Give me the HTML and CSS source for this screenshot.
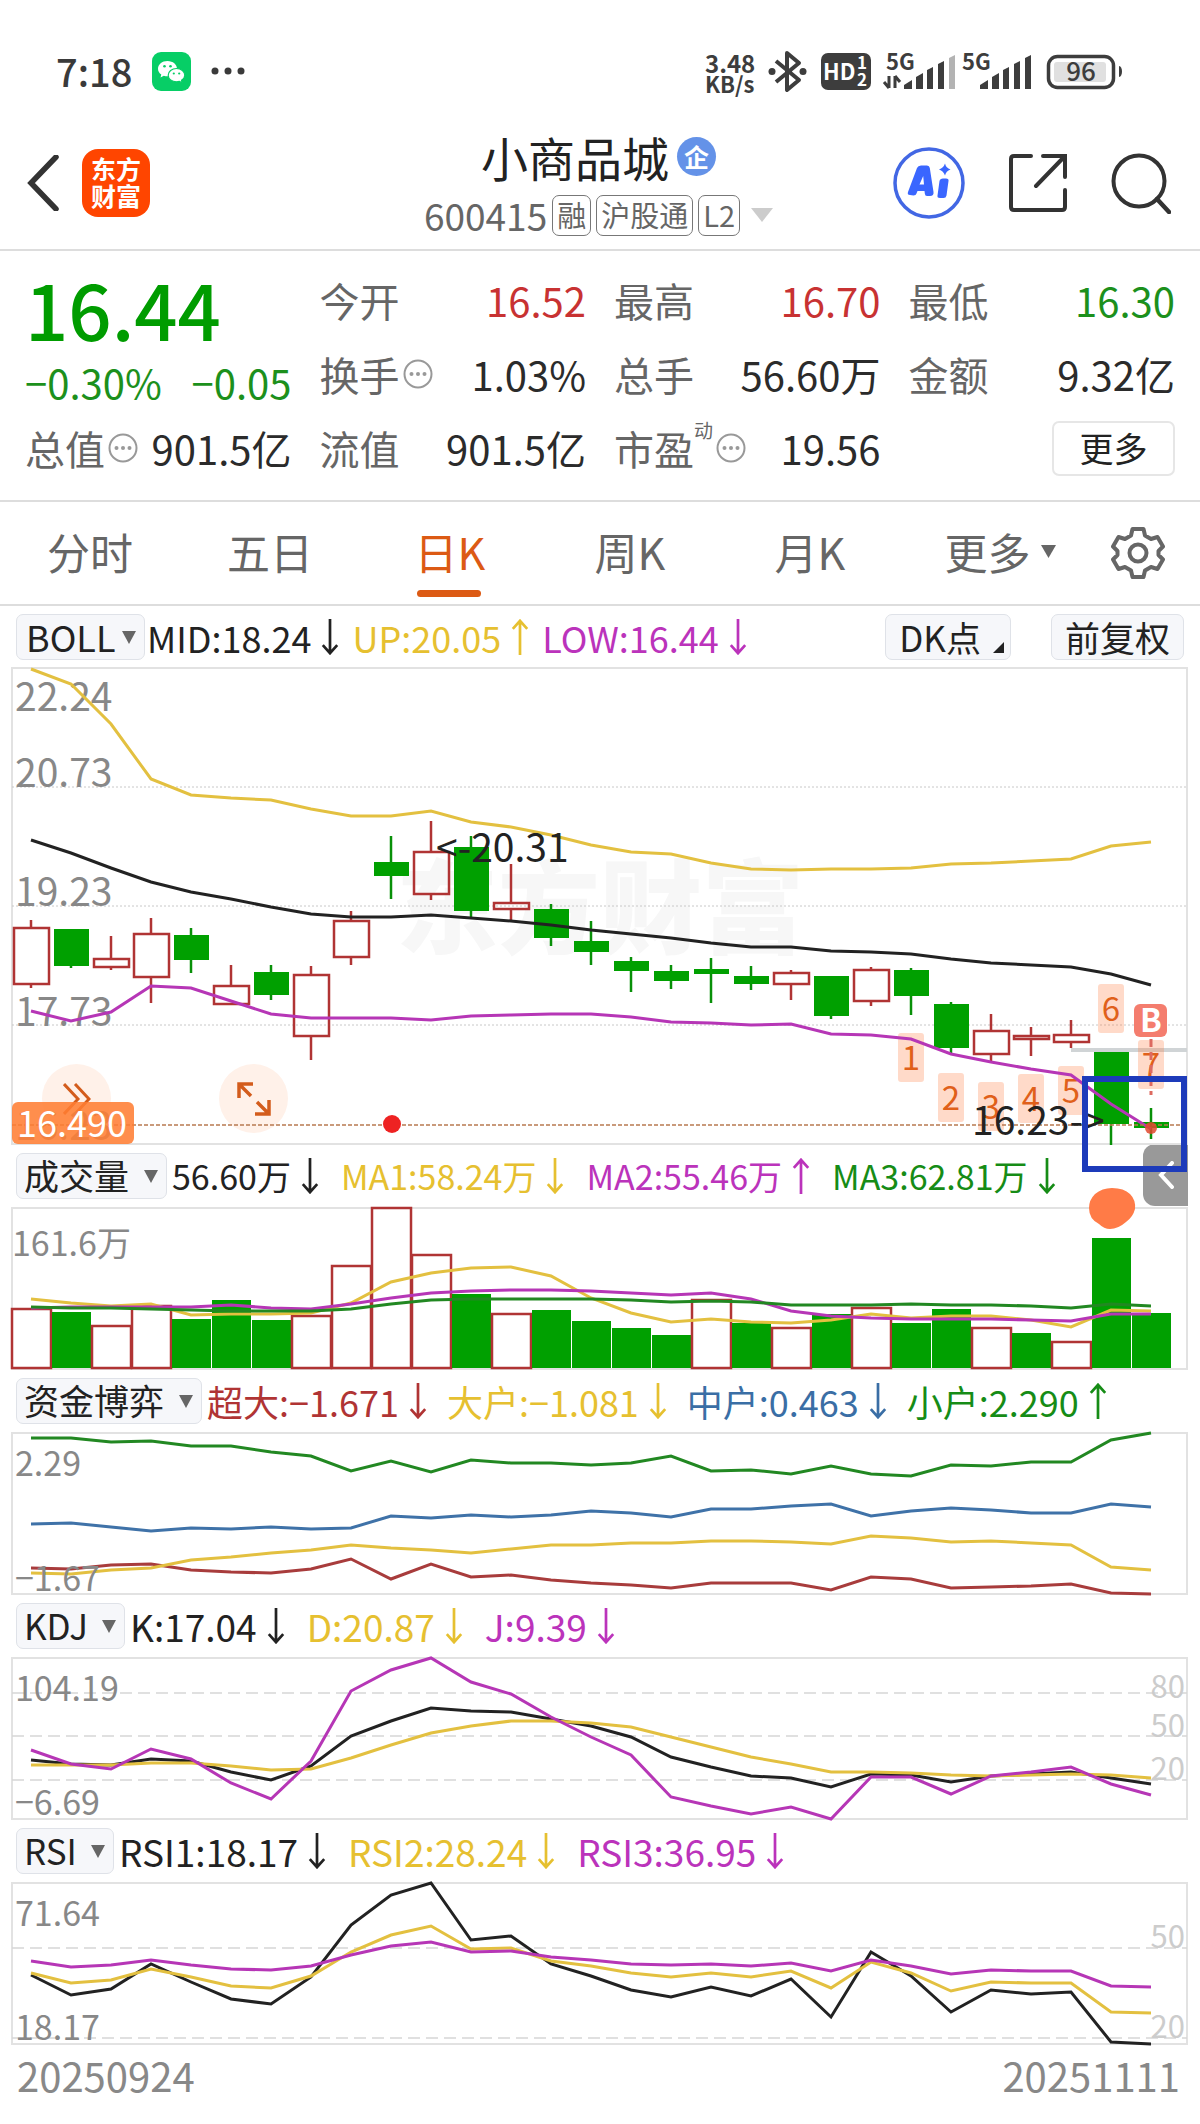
FILE: index.html
```html
<!DOCTYPE html>
<html lang="zh-CN">
<head>
<meta charset="utf-8">
<meta name="viewport" content="width=device-width, initial-scale=1">
<title>小商品城 600415</title>
<link rel="stylesheet" href="styles.css">
</head>
<body>
<svg class="sprite" aria-hidden="true">
  <symbol id="down" viewBox="0 0 18 40"><path d="M9 0V38M1 29L9 38L17 29" fill="none" stroke="currentColor" stroke-width="3"/></symbol>
  <symbol id="up" viewBox="0 0 18 40"><path d="M9 40V2M1 11L9 2L17 11" fill="none" stroke="currentColor" stroke-width="3"/></symbol>
  <symbol id="info" viewBox="0 0 30 30"><circle cx="15" cy="15" r="13.5" fill="none" stroke="#999" stroke-width="2"/><g fill="#999"><circle cx="8.500" cy="15" r="2"/><circle cx="15" cy="15" r="2"/><circle cx="21.500" cy="15" r="2"/></g></symbol>
</svg>

<header>
  <div class="status">
    <time>7:18</time>
    <svg class="wechat" viewBox="0 0 39 39" role="img" aria-label="微信">
      <rect width="39" height="39" rx="9" fill="#07ce66"/>
      <path d="M15.500 9C10 9 6 12.500 6 16.700c0 2.400 1.300 4.400 3.300 5.800L8.500 25.500l3.300-1.700c1.200.4 2.400.5 3.700.5 5.500 0 9.500-3.500 9.500-7.600S21 9 15.500 9z" fill="#fff"/>
      <path d="M24.500 16.500c-4.700 0-8.300 3.100-8.300 6.700s3.600 6.600 8.300 6.600c1.100 0 2-.1 2.900-.4l2.900 1.500-.8-2.600c2-1.300 3.300-3 3.300-5.100 0-3.600-3.600-6.700-8.300-6.700z" fill="#fff" stroke="#07ce66" stroke-width="1.200"/>
      <g fill="#07ce66"><circle cx="12.500" cy="14.300" r="1.300"/><circle cx="18.500" cy="14.300" r="1.300"/><circle cx="21.800" cy="21.500" r="1.100"/><circle cx="27.200" cy="21.500" r="1.100"/></g>
    </svg>
    <svg class="dots" viewBox="0 0 34 8" aria-hidden="true"><g fill="#3a3a3a"><circle cx="4" cy="4" r="3.500"/><circle cx="17" cy="4" r="3.500"/><circle cx="30" cy="4" r="3.500"/></g></svg>
    <svg class="system" viewBox="702 35 424 72" role="img" aria-label="系统状态">
      <g class="sys-text">
        <text x="705" y="73" font-size="24">3.48</text>
        <text x="705" y="93" font-size="22">KB/s</text>
        <text x="886" y="70" font-size="22">5G</text>
        <text x="962" y="70" font-size="22">5G</text>
      </g>
      <path d="M776 61L799 80L787 90V53L799 63L776 82" fill="none" stroke="#3d3d3d" stroke-width="4" stroke-linejoin="round"/>
      <circle cx="772" cy="71.500" r="3.500" fill="#3d3d3d"/><circle cx="803" cy="71.500" r="3.500" fill="#3d3d3d"/>
      <rect x="821" y="53" width="50" height="37" rx="7" fill="#3d3d3d"/>
      <g class="hd"><text x="823" y="80" font-size="22">HD</text><text x="857" y="69" font-size="17">1</text><text x="857" y="86" font-size="17">2</text></g>
      <path d="M889 76V88M889 88L884 82M895 88V76M895 76L900 82" fill="none" stroke="#3d3d3d" stroke-width="3"/>
      <g fill="#3d3d3d">
        <path d="M904 85l8-5v9h-8zM916 77l7-4v16h-7zM927 70l6-3v22h-6zM938 64l6-3v28h-6z"/>
        <path d="M980 85l8-5v9h-8zM992 77l7-4v16h-7zM1003 70l6-3v22h-6zM1014 64l6-3v28h-6zM1025 58l6-3v34h-6z"/>
      </g>
      <path d="M949 58l6-3v34h-6z" fill="#b3b3b3"/>
      <rect x="1048.500" y="56.500" width="65" height="31" rx="9" fill="#fff" stroke="#3d3d3d" stroke-width="3.500"/>
      <rect x="1054" y="62" width="52" height="20" rx="3" fill="#e0e0e0"/>
      <path d="M1119 66c4 0 4 11 0 11z" fill="#3d3d3d"/>
      <text class="battery" x="1081" y="81" font-size="26" text-anchor="middle">96</text>
    </svg>
  </div>

  <nav class="bar">
    <div class="bar-left">
      <button class="icon" aria-label="返回"><svg width="34" height="56" viewBox="0 0 34 56"><path d="M30 2L5 28L30 54" fill="none" stroke="#333" stroke-width="5.500" stroke-linecap="round"/></svg></button>
      <a class="logo" href="#">东方<br>财富</a>
    </div>
    <div class="stock">
      <h1>小商品城<span class="corp">企</span></h1>
      <div class="code"><span class="num">600415</span><span class="tag">融</span><span class="tag">沪股通</span><span class="tag">L2</span><svg width="22" height="14" viewBox="0 0 22 14" aria-hidden="true"><path d="M0 0H22L11 14z" fill="#ccc"/></svg></div>
    </div>
    <div class="bar-right">
      <button class="icon" aria-label="AI"><svg width="72" height="72" viewBox="0 0 72 72"><circle cx="36" cy="36" r="34" fill="none" stroke="#4267e4" stroke-width="3.500"/><path fill="#3a66ff" fill-rule="evenodd" d="M17 48Q14 48 15 45L24 21Q25 18.500 28 18.500H34Q36.500 18.500 36.800 21L40.500 45Q41 49 37 49H34Q32 49 31.800 46.500L31.500 44H24.500L23.500 46.500Q23 48.500 20.500 48.500zM26.500 37.500H31L30.200 29z"/><path fill="#3a66ff" d="M46.500 34Q47 31.500 50 31.500H53Q56 31.500 55.500 34L53.500 48.500Q53 51 50.500 51H47Q44 51 44.500 48.500zM52 16.500Q53 21 57.500 22.500Q53 24 52 28.500Q50.500 24 46 22.500Q50.500 21 52 16.500z"/></svg></button>
      <button class="icon" aria-label="分享"><svg width="60" height="60" viewBox="0 0 60 60"><path d="M23 3H6Q3 3 3 6V54Q3 57 6 57H54Q57 57 57 54V37M35 3H57V24M57 3L28 33" fill="none" stroke="#333" stroke-width="4" stroke-linecap="round"/></svg></button>
      <button class="icon" aria-label="搜索"><svg width="60" height="62" viewBox="0 0 60 62"><circle cx="28" cy="29" r="25.500" fill="none" stroke="#333" stroke-width="4"/><path d="M46 47L58 60" stroke="#333" stroke-width="4.500" stroke-linecap="round"/></svg></button>
    </div>
  </nav>
</header>

<main>
  <section class="quote">
    <div class="last">
      <strong>16.44</strong>
      <p><span>−0.30%</span><span>−0.05</span></p>
    </div>
    <div class="cell"><span>今开</span><b class="rise">16.52</b></div>
    <div class="cell"><span>最高</span><b class="rise">16.70</b></div>
    <div class="cell"><span>最低</span><b class="fall">16.30</b></div>
    <div class="cell"><span>换手<svg class="info"><use href="#info"/></svg></span><b>1.03%</b></div>
    <div class="cell"><span>总手</span><b>56.60万</b></div>
    <div class="cell"><span>金额</span><b>9.32亿</b></div>
    <div class="cell"><span>总值<svg class="info"><use href="#info"/></svg></span><b>901.5亿</b></div>
    <div class="cell"><span>流值</span><b>901.5亿</b></div>
    <div class="cell"><span>市盈<sup>动</sup><svg class="info"><use href="#info"/></svg></span><b>19.56</b></div>
    <div class="cell end"><button class="more">更多</button></div>
  </section>

  <nav class="tabs">
    <a href="#">分时</a>
    <a href="#">五日</a>
    <a href="#" class="on" aria-current="page">日K</a>
    <a href="#">周K</a>
    <a href="#">月K</a>
    <a href="#">更多<svg width="15" height="13" viewBox="0 0 15 13" aria-hidden="true"><path d="M0 0H15L7.500 13z" fill="#666"/></svg></a>
    <button class="icon" aria-label="设置"><svg width="54" height="54" viewBox="0 0 54 54"><path d="M21.500 3H32.500L34 9.500L40 13L46.500 11L52 20.500L47.500 25V29L52 33.500L46.500 43L40 41L34 44.500L32.500 51H21.500L20 44.500L14 41L7.500 43L2 33.500L6.500 29V25L2 20.500L7.500 11L14 13L20 9.500z" fill="none" stroke="#666" stroke-width="4" stroke-linejoin="round"/><circle cx="27" cy="27" r="8.500" fill="none" stroke="#666" stroke-width="4"/></svg></button>
  </nav>

  <section class="panel">
    <div class="legend tight">
      <span class="pick"><select aria-label="主图指标"><option>BOLL</option></select></span>
      <span class="v">MID:18.24<svg><use href="#down"/></svg></span>
      <span class="v yellow">UP:20.05<svg><use href="#up"/></svg></span>
      <span class="v purple">LOW:16.44<svg><use href="#down"/></svg></span>
      <button class="chip dk">DK点</button>
      <button class="chip">前复权</button>
    </div>
    <div class="canvas">
      <button class="round r1" aria-label="快进"><svg width="28" height="32" viewBox="0 0 28 32"><path d="M1 1L15 16L1 31M12 1L26 16L12 31" fill="none" stroke="#d35c1c" stroke-width="3"/></svg></button>
      <button class="round r2" aria-label="全屏"><svg width="34" height="34" viewBox="0 0 34 34"><path d="M2 16V2H16M2 2L14 14M32 18V32H18M32 32L20 20" fill="none" stroke="#d35c1c" stroke-width="3.500"/></svg></button>
      <button class="drawer" aria-label="展开"><svg width="16" height="28" viewBox="0 0 16 28"><path d="M14 2L3 14L14 26" fill="none" stroke="#fff" stroke-width="4" stroke-linecap="round"/></svg></button>
      <svg id="price" class="chart" viewBox="0 668 1200 476" role="img" aria-label="日K线">
        <text class="mark" x="396" y="946">东方财富</text>
      </svg>
      <span class="cursor">16.490</span>
    </div>
  </section>

  <section class="panel">
    <div class="legend">
      <span class="pick"><select aria-label="成交量指标"><option>成交量</option></select></span>
      <span class="v">56.60万<svg><use href="#down"/></svg></span>
      <span class="v yellow">MA1:58.24万<svg><use href="#down"/></svg></span>
      <span class="v purple">MA2:55.46万<svg><use href="#up"/></svg></span>
      <span class="v green">MA3:62.81万<svg><use href="#down"/></svg></span>
    </div>
    <svg id="volume" class="chart" viewBox="0 1208 1200 161" role="img" aria-label="成交量"></svg>
  </section>

  <section class="panel">
    <div class="legend wide">
      <span class="pick"><select aria-label="资金指标"><option>资金博弈</option></select></span>
      <span class="v red">超大:−1.671<svg><use href="#down"/></svg></span>
      <span class="v yellow">大户:−1.081<svg><use href="#down"/></svg></span>
      <span class="v blue">中户:0.463<svg><use href="#down"/></svg></span>
      <span class="v green">小户:2.290<svg><use href="#up"/></svg></span>
    </div>
    <svg id="funds" class="chart" viewBox="0 1433 1200 161" role="img" aria-label="资金博弈"></svg>
  </section>

  <section class="panel">
    <div class="legend latin">
      <span class="pick"><select aria-label="KDJ 指标"><option>KDJ</option></select></span>
      <span class="v">K:17.04<svg><use href="#down"/></svg></span>
      <span class="v yellow">D:20.87<svg><use href="#down"/></svg></span>
      <span class="v purple">J:9.39<svg><use href="#down"/></svg></span>
    </div>
    <svg id="kdj" class="chart" viewBox="0 1658 1200 161" role="img" aria-label="KDJ"></svg>
  </section>

  <section class="panel">
    <div class="legend latin">
      <span class="pick"><select aria-label="RSI 指标"><option>RSI</option></select></span>
      <span class="v">RSI1:18.17<svg><use href="#down"/></svg></span>
      <span class="v yellow">RSI2:28.24<svg><use href="#down"/></svg></span>
      <span class="v purple">RSI3:36.95<svg><use href="#down"/></svg></span>
    </div>
    <svg id="rsi" class="chart" viewBox="0 1883 1200 161" role="img" aria-label="RSI"></svg>
  </section>
</main>

<footer><time>20250924</time><time>20251111</time></footer>
<script src="charts.js"></script>
</body>
</html>
```

FILE: styles.css
```css
* { box-sizing: border-box; }

body {
  margin: 0;
  background: #fff;
  color: #222;
  font-family: "Noto Sans CJK SC", "Noto Sans", sans-serif;
  font-size: 40px;
  line-height: 1;
}

button, select { font: inherit; color: inherit; cursor: pointer; }
a { color: inherit; text-decoration: none; }
svg { display: block; flex: none; }
.sprite { position: absolute; width: 0; height: 0; }

.icon { display: flex; padding: 0; border: 0; background: none; }

/* status bar */
.status {
  display: flex;
  align-items: center;
  height: 92px;
  margin-top: 25px;
  padding: 0 74px 0 56px;
  color: #3a3a3a;
}
.status time { font-weight: 500; font-size: 38px; }
.wechat { width: 39px; height: 39px; margin-left: 20px; }
.dots { width: 34px; height: 8px; margin-left: 20px; }
.system { width: 424px; height: 72px; margin-left: auto; }
.sys-text { font-weight: 700; fill: #3d3d3d; }
.hd { font-weight: 700; fill: #fff; }
.battery { font-weight: 500; fill: #3d3d3d; }

/* title bar */
.bar {
  display: grid;
  grid-template-columns: 1fr auto 1fr;
  align-items: center;
  height: 134px;
  padding: 0 29px 0 26px;
  border-bottom: 2px solid #ddd;
}
.bar-left { display: flex; align-items: center; gap: 22px; }
.logo {
  width: 68px;
  height: 68px;
  padding-top: 6px;
  border-radius: 16px;
  background: #ff4500;
  color: #fff;
  font-size: 25px;
  font-weight: 700;
  line-height: 27px;
  text-align: center;
}
.stock { display: grid; justify-items: center; gap: 12px; }
h1 {
  display: flex;
  align-items: center;
  gap: 8px;
  margin: 0;
  font-size: 47px;
  font-weight: 400;
  line-height: 52px;
}
.corp {
  width: 39px;
  height: 39px;
  border-radius: 50%;
  background: #6492e8;
  color: #fff;
  font-size: 25px;
  font-weight: 700;
  line-height: 38px;
  text-align: center;
}
.code { display: flex; align-items: center; gap: 5px; color: #666; }
.code .num { font-size: 37px; }
.code svg { margin-left: 6px; }
.tag {
  height: 41px;
  padding: 0 4px;
  border: 1px solid #777;
  border-radius: 7px;
  font-size: 29px;
  line-height: 37px;
}
.bar-right { display: flex; align-items: center; justify-content: flex-end; gap: 43px; }

/* quote grid */
.quote {
  display: grid;
  grid-template-columns: repeat(4, 1fr);
  grid-auto-rows: 74px;
  column-gap: 28px;
  padding: 12px 25px 15px;
  border-bottom: 2px solid #ddd;
}
.last { grid-row: span 2; color: #009c00; }
.last strong { display: block; font-size: 76px; font-weight: 500; line-height: 90px; }
.last p { display: flex; justify-content: space-between; margin: 0; line-height: 58px; }
.last p { color: #1c901c; }
.cell { display: flex; align-items: center; justify-content: space-between; white-space: nowrap; }
.cell span { display: flex; align-items: center; color: #666; }
.cell b { font-weight: 400; color: #2b2b2b; }
.cell .rise { color: #c83232; }
.cell .fall { color: #1c901c; }
.cell.end { justify-content: flex-end; }
.info { width: 30px; height: 30px; margin-left: 3px; }
sup { align-self: flex-start; font-size: 19px; line-height: 1; margin-top: -8px; }
.more {
  width: 123px;
  height: 55px;
  padding: 0;
  border: 2px solid #e6e6e6;
  border-radius: 7px;
  background: #fff;
  font-size: 34px;
  line-height: 48px;
}

/* period tabs */
.tabs {
  display: grid;
  grid-template-columns: repeat(5, 180fr) 200fr 76fr 24fr;
  align-items: center;
  justify-items: center;
  height: 104px;
  border-bottom: 2px solid #ddd;
  color: #666;
  font-size: 43px;
}
.tabs a { position: relative; display: flex; align-items: center; gap: 10px; padding-bottom: 4px; line-height: 56px; }
.tabs .on { color: #dc5a14; }
.tabs .on::after {
  content: "";
  position: absolute;
  left: 2px;
  right: 4px;
  bottom: -14px;
  height: 7px;
  border-radius: 4px;
  background: #dc5a14;
}

/* indicator panels */
.legend {
  display: flex;
  align-items: center;
  height: 64px;
  padding: 0 16px;
  font-size: 34px;
  line-height: 44px;
  white-space: nowrap;
}
.tight { font-size: 36px; height: 62px; }
.wide { font-size: 36px; }
.latin { font-size: 37px; }
.pick { position: relative; margin-right: 5px; }
.pick::after {
  content: "";
  position: absolute;
  right: 9px;
  top: 17px;
  border: solid transparent;
  border-width: 13px 7px 0;
  border-top-color: #666;
  pointer-events: none;
}
.pick select, .chip {
  height: 46px;
  border: 1px solid #dfe2e8;
  border-radius: 7px;
  background: #f6f7fa;
}
.pick select { display: block; appearance: none; padding: 0 36px 2px 7px; font-size: 35px; line-height: 42px; }
.tight .pick { margin-right: 2px; }
.tight .pick select { padding: 0 28px 2px 9px; font-size: 36px; }
.v { display: flex; align-items: center; gap: 10px; margin-right: 22px; }
.tight .v { margin-right: 13px; }
.wide .v { margin-right: 20px; }
.v svg { width: 18px; height: 36px; }
.yellow { color: #e6c030; }
.purple { color: #bb33bb; }
.green { color: #168c16; }
.red { color: #b03434; }
.blue { color: #3a6ea5; }
.chip { padding: 0 13px; font-size: 35px; line-height: 40px; }
.dk { position: relative; margin: 0 40px 0 auto; padding-right: 29px; }
.dk::after {
  content: "";
  position: absolute;
  right: 6px;
  bottom: 6px;
  border: solid transparent;
  border-width: 0 0 11px 11px;
  border-bottom-color: #222;
}

.canvas { position: relative; }
.chart { width: 100%; height: auto; overflow: visible; }
.canvas .chart { position: relative; z-index: 2; pointer-events: none; }

.round {
  position: absolute;
  z-index: 1;
  bottom: 11px;
  display: grid;
  place-items: center;
  width: 69px;
  height: 69px;
  padding: 0;
  border: 0;
  border-radius: 50%;
  background: #fff1e9;
}
.r1 { left: 42px; }
.r2 { left: 219px; }
.drawer {
  position: absolute;
  z-index: 1;
  top: 100%;
  right: 12px;
  display: grid;
  place-items: center;
  width: 45px;
  height: 62px;
  padding: 0;
  border: 0;
  border-radius: 12px 0 0 12px;
  background: #999;
}
.cursor {
  position: absolute;
  z-index: 3;
  left: 12px;
  bottom: 0;
  width: 122px;
  height: 42px;
  padding-left: 5px;
  border-radius: 6px;
  background: rgba(255, 125, 50, .87);
  color: #fff;
  font-size: 36px;
  line-height: 38px;
}

/* chart parts */
.frame { fill: none; stroke: #e2e2e2; stroke-width: 2; }
.grid { stroke: #c8c8c8; stroke-width: 1; stroke-dasharray: 2 2; }
.dash { stroke: #d6d6d6; stroke-width: 1.5; stroke-dasharray: 12 6; }
.now { stroke: #b87a50; stroke-width: 1.5; stroke-dasharray: 4 2; }
.line { fill: none; stroke-width: 3; }
.axis { fill: #888; font-size: 34px; }
.axis.big { font-size: 39px; }
.side { fill: #ccc; font-size: 31px; text-anchor: end; }
.mark { fill: #f7f7f7; font-size: 102px; font-weight: 900; }
.note { fill: #222; font-size: 39px; }
.up { fill: #fff; stroke: #b03434; stroke-width: 2.5; }
.open { fill: none; stroke: #b03434; stroke-width: 2.5; }
.dn { fill: #00a000; stroke: none; }
.wick-dn { stroke: #089008; stroke-width: 2.5; }
.step { fill: #ff7a3c; fill-opacity: .28; }
.step-no { fill: #e0601a; font-size: 33px; text-anchor: middle; }
.buy { fill: #f47d6e; }
.buy-t { fill: #fff; font-size: 32px; font-weight: 700; text-anchor: middle; }
.buy-l { stroke: #dd6a60; stroke-width: 3; stroke-dasharray: 8 5; }
.gap { stroke: #d0d4d6; stroke-width: 4; }
.box { fill: none; stroke: #1d3bba; stroke-width: 6; }
.dot { fill: #ee2222; }
.pin { fill: #e0482e; fill-opacity: .85; }
.blob { fill: #ff7b47; }

footer {
  display: flex;
  justify-content: space-between;
  height: 80px;
  padding: 8px 20px 0 17px;
  color: #888;
  line-height: 46px;
}
```

FILE: charts.js
```js
// All charts share one board: x = 31 + 40 per trading day, y in board units.
const NS = "http://www.w3.org/2000/svg";
const X = i => 31 + 40 * i;
const C = { yellow: "#e3c040", black: "#222", purple: "#b636b6", green: "#228822", blue: "#3f72a8", red: "#a83c3c" };

function add(svg, tag, cls, attrs, text) {
  const el = document.createElementNS(NS, tag);
  el.setAttribute("class", cls);
  for (const k in attrs) el.setAttribute(k, attrs[k]);
  if (text) el.textContent = text;
  svg.appendChild(el);
}
function line(svg, color, ys) {
  add(svg, "polyline", "line", { stroke: C[color], points: ys.map((y, i) => X(i) + "," + y).join(" ") });
}
function rule(svg, cls, y, x1 = 12, x2 = 1187) { add(svg, "line", cls, { x1, x2, y1: y, y2: y }); }
function frame(svg, top, h) { add(svg, "rect", "frame", { x: 12, y: top, width: 1175, height: h }); }
function axis(svg, cls, rows, x = 15) { rows.forEach(([t, y]) => add(svg, "text", cls, { x, y }, t)); }

// price
const price = document.getElementById("price");
frame(price, 668, 476);
[787, 906, 1025].forEach(y => rule(price, "grid", y));
axis(price, "axis big", [["22.24", 711], ["20.73", 787], ["19.23", 906], ["17.73", 1026], ["16.23", 1140]]);

// [direction, high, body top, body bottom, low]
const candles = [
  ["u",920,928,984,988],["d",929,929,966,968],["u",936,959,967,970],["u",918,934,977,1003],["d",928,935,960,973],
  ["u",965,986,1004,1005],["d",965,972,995,1000],["u",966,975,1036,1060],["u",911,921,957,965],["d",836,862,876,899],
  ["u",821,852,894,900],["d",836,847,911,917],["u",864,903,909,921],["d",904,909,938,946],["d",921,941,952,965],
  ["d",957,961,971,992],["d",965,971,981,989],["d",958,969,974,1003],["d",966,976,984,990],["u",970,973,984,1000],
  ["d",976,976,1016,1019],["u",967,970,1001,1006],["d",968,970,996,1015],["d",1002,1004,1048,1053],["u",1014,1031,1054,1062],
  ["u",1027,1036,1039,1056],["u",1020,1035,1042,1048],["d",1052,1052,1124,1145],["d",1108,1122,1128,1139]
];
candles.forEach(([dir, hi, top, bot, lo], i) => {
  const up = dir === "u", x = X(i), wick = up ? "open" : "wick-dn";
  add(price, "line", wick, { x1: x, x2: x, y1: hi, y2: top });
  add(price, "line", wick, { x1: x, x2: x, y1: bot, y2: lo });
  add(price, "rect", up ? "open" : "dn", { x: x - 17, y: top, width: 35, height: bot - top });
});
rule(price, "gap", 1050, 1071);
[[911,1033,1],[951,1073,2],[991,1082,3],[1031,1074,4],[1071,1066,5],[1111,984,6],[1151,1040,7]].forEach(([x, y, n]) => {
  add(price, "rect", "step", { x: x - 13, y, width: 26, height: 49, rx: 3 });
  add(price, "text", "step-no", { x, y: y + 37 }, String(n));
});
add(price, "line", "buy-l", { x1: 1151, x2: 1151, y1: 1039, y2: 1095 });
add(price, "rect", "buy", { x: 1134, y: 1004, width: 33, height: 33, rx: 6 });
add(price, "text", "buy-t", { x: 1151, y: 1032 }, "B");
line(price, "yellow", [669,684,724,779,795,798,800,809,816,816,811,822,827,835,845,852,854,863,869,870,869,869,868,864,863,861,859,846,842]);
line(price, "black", [840,853,868,882,892,899,907,914,917,917,915,918,921,925,930,934,938,943,947,947,951,952,954,959,963,965,967,974,985]);
line(price, "purple", [1011,1021,1012,986,988,1001,1014,1018,1018,1018,1020,1016,1015,1014,1014,1017,1022,1023,1025,1024,1034,1035,1039,1054,1062,1069,1075,1104,1129]);
rule(price, "now", 1125);
add(price, "circle", "dot", { cx: 392, cy: 1124, r: 9 });
add(price, "circle", "pin", { cx: 1151, cy: 1128, r: 6 });
add(price, "text", "note", { x: 436, y: 862 }, "<-20.31");
add(price, "text", "note", { x: 972, y: 1135 }, "16.23->");
add(price, "rect", "box", { x: 1085, y: 1079, width: 99, height: 90 });

// volume
const volume = document.getElementById("volume");
frame(volume, 1208, 161);
axis(volume, "axis", [["161.6万", 1256]], 12);
const bars = [
  ["u",1309],["d",1312],["u",1326],["u",1306],["d",1319],["d",1300],["d",1320],["u",1316],["u",1266],["u",1208],
  ["u",1255],["d",1294],["u",1314],["d",1310],["d",1321],["d",1328],["d",1335],["u",1300],["d",1323],["u",1328],
  ["d",1314],["u",1308],["d",1323],["d",1309],["u",1328],["d",1333],["u",1342],["d",1238],["d",1313]
];
bars.forEach(([dir, y], i) => {
  add(volume, "rect", dir === "u" ? "up" : "dn", { x: X(i) - 19, y, width: 39, height: 1368 - y });
});
line(volume, "yellow", [1299,1303,1306,1304,1315,1314,1314,1313,1303,1282,1273,1268,1267,1276,1298,1313,1322,1319,1322,1323,1320,1314,1318,1316,1316,1320,1327,1310,1311]);
line(volume, "purple", [1308,1307,1307,1307,1307,1305,1308,1309,1304,1298,1293,1291,1290,1290,1291,1293,1295,1293,1299,1311,1316,1318,1319,1319,1319,1320,1321,1314,1314]);
line(volume, "green", [1307,1308,1308,1309,1310,1311,1311,1311,1309,1304,1300,1299,1299,1299,1299,1300,1302,1301,1302,1305,1305,1305,1304,1305,1305,1306,1308,1304,1306]);
add(volume, "path", "blob", { d: "M1112 1188Q1124 1188 1130 1194Q1136 1200 1135 1209Q1133 1217 1126 1222Q1118 1229 1110 1229Q1104 1229 1099 1224Q1089 1219 1089 1208Q1089 1200 1095 1194Q1102 1188 1112 1188z" });

// funds
const funds = document.getElementById("funds");
frame(funds, 1433, 161);
line(funds, "green", [1438,1438,1442,1441,1446,1446,1452,1456,1471,1461,1472,1460,1463,1463,1465,1463,1456,1471,1470,1474,1466,1474,1476,1465,1466,1462,1462,1440,1433]);
line(funds, "blue", [1524,1523,1527,1531,1528,1529,1527,1529,1528,1516,1518,1515,1517,1515,1511,1513,1517,1509,1509,1506,1504,1516,1511,1508,1510,1513,1513,1504,1507]);
line(funds, "red", [1568,1569,1565,1564,1570,1572,1573,1569,1559,1579,1564,1577,1575,1580,1583,1585,1588,1583,1583,1583,1590,1577,1579,1588,1587,1586,1584,1593,1594]);
line(funds, "yellow", [1573,1574,1570,1568,1560,1557,1553,1550,1545,1548,1550,1553,1549,1545,1545,1543,1543,1541,1541,1542,1544,1536,1538,1542,1541,1543,1545,1567,1570]);
axis(funds, "axis", [["2.29", 1476], ["−1.67", 1591]]);

// KDJ
const kdj = document.getElementById("kdj");
frame(kdj, 1658, 161);
[1693, 1736, 1780].forEach(y => rule(kdj, "dash", y));
axis(kdj, "axis", [["104.19", 1701], ["−6.69", 1815]]);
axis(kdj, "side", [["80", 1698], ["50", 1737], ["20", 1780]], 1185);
line(kdj, "black", [1760,1764,1765,1759,1761,1772,1780,1766,1736,1721,1708,1711,1712,1719,1726,1737,1757,1767,1776,1778,1787,1774,1775,1782,1776,1774,1772,1778,1784]);
line(kdj, "yellow", [1765,1765,1765,1763,1763,1766,1770,1769,1758,1745,1733,1726,1721,1721,1723,1727,1737,1747,1757,1764,1772,1772,1773,1775,1776,1775,1774,1775,1778]);
line(kdj, "purple", [1750,1764,1769,1749,1759,1783,1799,1761,1691,1670,1658,1682,1694,1717,1737,1755,1797,1806,1814,1807,1819,1777,1777,1794,1776,1772,1767,1784,1795]);

// RSI
const rsi = document.getElementById("rsi");
frame(rsi, 1883, 161);
[1948, 2038].forEach(y => rule(rsi, "dash", y));
axis(rsi, "axis", [["71.64", 1926], ["18.17", 2040]]);
axis(rsi, "side", [["50", 1948], ["20", 2038]], 1185);
line(rsi, "black", [1975,1995,1989,1964,1982,1999,2004,1977,1925,1895,1883,1940,1936,1964,1976,1990,1997,1987,1996,1979,2017,1952,1976,2012,1990,1994,1992,2042,2044]);
line(rsi, "yellow", [1973,1983,1980,1969,1977,1986,1988,1976,1952,1935,1926,1949,1948,1961,1966,1973,1977,1973,1977,1971,1988,1962,1973,1991,1982,1983,1983,2012,2013]);
line(rsi, "purple", [1961,1967,1965,1960,1965,1969,1970,1966,1955,1946,1942,1952,1951,1957,1960,1964,1965,1964,1966,1963,1971,1960,1966,1974,1970,1971,1971,1986,1987]);
```
